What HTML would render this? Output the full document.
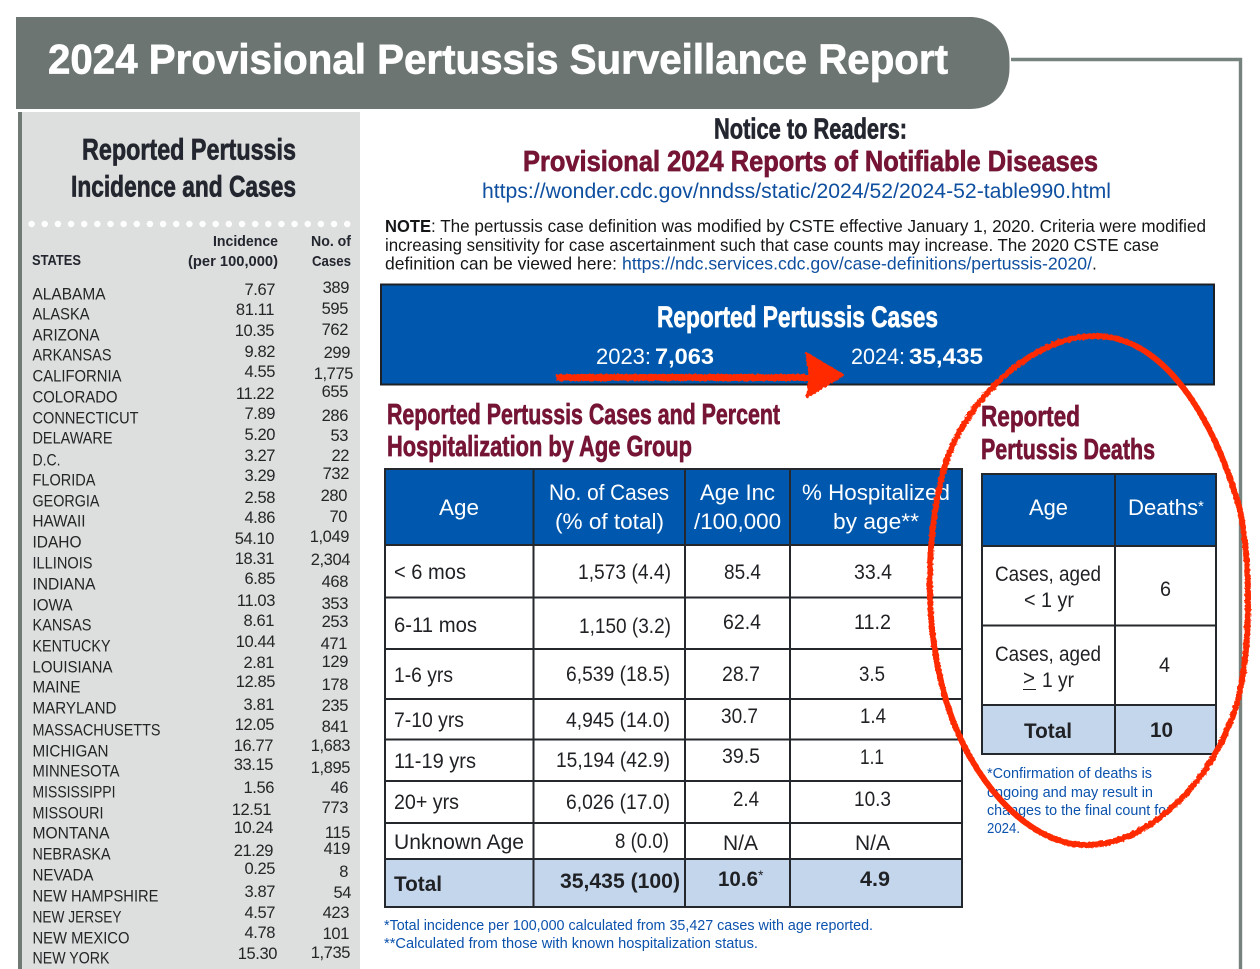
<!DOCTYPE html>
<html lang="en">
<head>
<meta charset="utf-8">
<title>2024 Provisional Pertussis Surveillance Report</title>
<style>
html,body{margin:0;padding:0;background:#fff;width:1260px;height:969px;overflow:hidden}
svg{display:block;position:absolute;left:0;top:0}
text{font-family:"Liberation Sans",Arial,sans-serif}
.st text{font-size:17px;fill:#232527}
.inc text{font-size:16.5px;letter-spacing:-.4px;fill:#232527;text-anchor:end}
.cs text{font-size:16.5px;letter-spacing:-.4px;fill:#232527;text-anchor:end}
.h{font-weight:700}
.hs{font-weight:700;stroke-width:.7px;paint-order:stroke}
.mar{fill:#751435;stroke:#751435;stroke-width:.7px;font-weight:700;font-size:29px}
.t{font-size:21px;fill:#1f2124}
.w{font-size:22px;fill:#fff}
.b{font-weight:700}
.fn{font-size:14.5px;fill:#0b52ad}
.nt{font-size:17.5px;fill:#141618}
</style>
</head>
<body>
<svg width="1260" height="969" viewBox="0 0 1260 969" xmlns="http://www.w3.org/2000/svg">
<defs>
<filter id="rough" x="-5%" y="-5%" width="110%" height="110%">
<feTurbulence type="fractalNoise" baseFrequency="0.35" numOctaves="2" seed="4"/>
<feDisplacementMap in="SourceGraphic" scale="3"/>
</filter>
</defs>
<rect width="1260" height="969" fill="#fff"/>

<!-- frame -->
<path d="M1011 59.500H1240.500V969" fill="none" stroke="#76827d" stroke-width="3.400"/>
<path d="M16 17H970C994 17 1009.500 36 1009.500 60V68C1009.500 92 994 109 970 109H16Z" fill="#6c7571"/>
<text x="48" y="73.500" font-size="42" class="hs" fill="#fff" stroke="#fff" textLength="900" lengthAdjust="spacingAndGlyphs">2024 Provisional Pertussis Surveillance Report</text>

<!-- sidebar -->
<rect x="22" y="112" width="338" height="857" fill="#dcdfde"/>
<rect x="18" y="112" width="4" height="857" fill="#6f7a75"/>
<text x="82" y="159.500" font-size="30" class="hs" fill="#23262e" stroke="#23262e" textLength="214" lengthAdjust="spacingAndGlyphs">Reported Pertussis</text>
<text x="71" y="196.500" font-size="30" class="hs" fill="#23262e" stroke="#23262e" textLength="225" lengthAdjust="spacingAndGlyphs">Incidence and Cases</text>
<line x1="31.600" y1="224" x2="350" y2="224" stroke="#fff" stroke-width="6.500" stroke-linecap="round" stroke-dasharray="0 13.150"/>
<g font-size="15" font-weight="700" fill="#23262e">
<text x="213" y="246" textLength="65" lengthAdjust="spacingAndGlyphs">Incidence</text>
<text x="188" y="266" textLength="90" lengthAdjust="spacingAndGlyphs">(per 100,000)</text>
<text x="311" y="246" textLength="40" lengthAdjust="spacingAndGlyphs">No. of</text>
<text x="312" y="266" textLength="39" lengthAdjust="spacingAndGlyphs">Cases</text>
<text x="32" y="265" textLength="49" lengthAdjust="spacingAndGlyphs">STATES</text>
</g>
<g class="st" transform="translate(-.5 -.5)">
<text x="33" y="300" textLength="73" lengthAdjust="spacingAndGlyphs">ALABAMA</text>
<text x="33" y="320" textLength="57" lengthAdjust="spacingAndGlyphs">ALASKA</text>
<text x="33" y="341" textLength="67" lengthAdjust="spacingAndGlyphs">ARIZONA</text>
<text x="33" y="361" textLength="79" lengthAdjust="spacingAndGlyphs">ARKANSAS</text>
<text x="33" y="382" textLength="89" lengthAdjust="spacingAndGlyphs">CALIFORNIA</text>
<text x="33" y="403" textLength="85" lengthAdjust="spacingAndGlyphs">COLORADO</text>
<text x="33" y="424" textLength="106" lengthAdjust="spacingAndGlyphs">CONNECTICUT</text>
<text x="33" y="444" textLength="80" lengthAdjust="spacingAndGlyphs">DELAWARE</text>
<text x="33" y="466" textLength="28" lengthAdjust="spacingAndGlyphs">D.C.</text>
<text x="33" y="486" textLength="63" lengthAdjust="spacingAndGlyphs">FLORIDA</text>
<text x="33" y="507" textLength="67" lengthAdjust="spacingAndGlyphs">GEORGIA</text>
<text x="33" y="527" textLength="53" lengthAdjust="spacingAndGlyphs">HAWAII</text>
<text x="33" y="548" textLength="49" lengthAdjust="spacingAndGlyphs">IDAHO</text>
<text x="33" y="569" textLength="60" lengthAdjust="spacingAndGlyphs">ILLINOIS</text>
<text x="33" y="590" textLength="63" lengthAdjust="spacingAndGlyphs">INDIANA</text>
<text x="33" y="611" textLength="40" lengthAdjust="spacingAndGlyphs">IOWA</text>
<text x="33" y="631" textLength="59" lengthAdjust="spacingAndGlyphs">KANSAS</text>
<text x="33" y="652" textLength="78" lengthAdjust="spacingAndGlyphs">KENTUCKY</text>
<text x="33" y="673" textLength="80" lengthAdjust="spacingAndGlyphs">LOUISIANA</text>
<text x="33" y="693" textLength="48" lengthAdjust="spacingAndGlyphs">MAINE</text>
<text x="33" y="714" textLength="84" lengthAdjust="spacingAndGlyphs">MARYLAND</text>
<text x="33" y="736" textLength="128" lengthAdjust="spacingAndGlyphs">MASSACHUSETTS</text>
<text x="33" y="757" textLength="76" lengthAdjust="spacingAndGlyphs">MICHIGAN</text>
<text x="33" y="777" textLength="87" lengthAdjust="spacingAndGlyphs">MINNESOTA</text>
<text x="33" y="798" textLength="83" lengthAdjust="spacingAndGlyphs">MISSISSIPPI</text>
<text x="33" y="819" textLength="71" lengthAdjust="spacingAndGlyphs">MISSOURI</text>
<text x="33" y="839" textLength="77" lengthAdjust="spacingAndGlyphs">MONTANA</text>
<text x="33" y="860" textLength="78" lengthAdjust="spacingAndGlyphs">NEBRASKA</text>
<text x="33" y="881" textLength="61" lengthAdjust="spacingAndGlyphs">NEVADA</text>
<text x="33" y="902" textLength="126" lengthAdjust="spacingAndGlyphs">NEW HAMPSHIRE</text>
<text x="33" y="923" textLength="89" lengthAdjust="spacingAndGlyphs">NEW JERSEY</text>
<text x="33" y="944" textLength="97" lengthAdjust="spacingAndGlyphs">NEW MEXICO</text>
<text x="33" y="964" textLength="77" lengthAdjust="spacingAndGlyphs">NEW YORK</text>
</g>
<g class="inc">
<text x="275" y="295">7.67</text><text x="274" y="315">81.11</text><text x="274" y="336">10.35</text><text x="275" y="357">9.82</text>
<text x="275" y="377">4.55</text><text x="274" y="399">11.22</text><text x="275" y="419">7.89</text><text x="275" y="440">5.20</text>
<text x="275" y="461">3.27</text><text x="275" y="481">3.29</text><text x="275" y="503">2.58</text><text x="275" y="523">4.86</text>
<text x="274" y="544">54.10</text><text x="274" y="564">18.31</text><text x="275" y="584">6.85</text><text x="275" y="606">11.03</text>
<text x="274" y="626">8.61</text><text x="275" y="647">10.44</text><text x="274" y="668">2.81</text><text x="275" y="687">12.85</text>
<text x="274" y="710">3.81</text><text x="274" y="730">12.05</text><text x="273" y="751">16.77</text><text x="273" y="770">33.15</text>
<text x="274" y="793">1.56</text><text x="271" y="815">12.51</text><text x="273" y="833">10.24</text><text x="273" y="856">21.29</text>
<text x="275" y="874">0.25</text><text x="275" y="897">3.87</text><text x="275" y="918">4.57</text><text x="275" y="938">4.78</text>
<text x="277" y="959">15.30</text>
</g>
<g class="cs">
<text x="349" y="293">389</text><text x="348" y="314">595</text><text x="348" y="335">762</text><text x="350" y="358">299</text>
<text x="353" y="379">1,775</text><text x="348" y="397">655</text><text x="348" y="421">286</text><text x="348" y="441">53</text>
<text x="349" y="461">22</text><text x="349" y="479">732</text><text x="347" y="501">280</text><text x="347" y="522">70</text>
<text x="349" y="542">1,049</text><text x="350" y="565">2,304</text><text x="348" y="587">468</text><text x="348" y="609">353</text>
<text x="348" y="627">253</text><text x="347" y="649">471</text><text x="348" y="667">129</text><text x="348" y="690">178</text>
<text x="348" y="711">235</text><text x="348" y="732">841</text><text x="350" y="751">1,683</text><text x="350" y="773">1,895</text>
<text x="348" y="793">46</text><text x="348" y="813">773</text><text x="350" y="838">115</text><text x="350" y="854">419</text>
<text x="348" y="877">8</text><text x="351" y="898">54</text><text x="349" y="918">423</text><text x="349" y="939">101</text>
<text x="350" y="958">1,735</text>
</g>

<!-- notice -->
<text x="714" y="138.500" font-size="29" class="hs" fill="#23262e" stroke="#23262e" textLength="193" lengthAdjust="spacingAndGlyphs">Notice to Readers:</text>
<text x="523" y="171" class="mar" textLength="575" lengthAdjust="spacingAndGlyphs">Provisional 2024 Reports of Notifiable Diseases</text>
<text x="482" y="198" font-size="21.500" fill="#0f4fa0" textLength="629" lengthAdjust="spacingAndGlyphs">https://wonder.cdc.gov/nndss/static/2024/52/2024-52-table990.html</text>
<text x="385" y="232" class="nt h" textLength="46" lengthAdjust="spacingAndGlyphs">NOTE</text>
<text x="431" y="232" class="nt" textLength="775" lengthAdjust="spacingAndGlyphs">: The pertussis case definition was modified by CSTE effective January 1, 2020. Criteria were modified</text>
<text x="385" y="251" class="nt" textLength="774" lengthAdjust="spacingAndGlyphs">increasing sensitivity for case ascertainment such that case counts may increase. The 2020 CSTE case</text>
<text x="385" y="269.500" class="nt" textLength="232" lengthAdjust="spacingAndGlyphs">definition can be viewed here:</text>
<text x="622" y="269.500" class="nt" style="fill:#0f4fa0" textLength="470" lengthAdjust="spacingAndGlyphs">https://ndc.services.cdc.gov/case-definitions/pertussis-2020/</text>
<text x="1092" y="269.500" class="nt">.</text>

<!-- blue box -->
<rect x="381" y="284.500" width="833" height="100" fill="#0058ae" stroke="#1d2126" stroke-width="2"/>
<text x="657" y="327" font-size="30" class="hs" fill="#fff" stroke="#fff" textLength="281" lengthAdjust="spacingAndGlyphs">Reported Pertussis Cases</text>
<text x="596" y="364" font-size="22" fill="#fff" textLength="55" lengthAdjust="spacingAndGlyphs">2023:</text>
<text x="655" y="364" font-size="22" class="h" fill="#fff" textLength="59" lengthAdjust="spacingAndGlyphs">7,063</text>
<text x="851" y="364" font-size="22" fill="#fff" textLength="54" lengthAdjust="spacingAndGlyphs">2024:</text>
<text x="909" y="364" font-size="22" class="h" fill="#fff" textLength="74" lengthAdjust="spacingAndGlyphs">35,435</text>

<!-- headings -->
<text x="387" y="424" class="mar" textLength="393" lengthAdjust="spacingAndGlyphs">Reported Pertussis Cases and Percent</text>
<text x="387" y="456" class="mar" textLength="305" lengthAdjust="spacingAndGlyphs">Hospitalization by Age Group</text>
<text x="981" y="426" class="mar" textLength="99" lengthAdjust="spacingAndGlyphs">Reported</text>
<text x="981" y="459" class="mar" textLength="174" lengthAdjust="spacingAndGlyphs">Pertussis Deaths</text>

<!-- table 1 -->
<rect x="385" y="469" width="577" height="76" fill="#0058ae"/>
<rect x="385" y="859" width="577" height="48" fill="#c4d6ec"/>
<g fill="none" stroke="#24272b" stroke-width="2">
<rect x="385" y="469" width="577" height="438"/>
<path d="M533.500 469V907M685 469V907M790 469V907"/>
<path d="M385 545H962M385 597.500H962M385 649H962M385 699H962M385 739.500H962M385 781H962M385 823H962M385 859H962"/>
</g>
<g class="w">
<text x="439" y="515" textLength="40" lengthAdjust="spacingAndGlyphs">Age</text>
<text x="549" y="500" textLength="120" lengthAdjust="spacingAndGlyphs">No. of Cases</text>
<text x="555" y="529" textLength="109" lengthAdjust="spacingAndGlyphs">(% of total)</text>
<text x="700" y="500" textLength="75" lengthAdjust="spacingAndGlyphs">Age Inc</text>
<text x="694" y="529" textLength="87" lengthAdjust="spacingAndGlyphs">/100,000</text>
<text x="802" y="500" textLength="148" lengthAdjust="spacingAndGlyphs">% Hospitalized</text>
<text x="833" y="529" textLength="86" lengthAdjust="spacingAndGlyphs">by age**</text>
</g>
<g class="t">
<text x="394" y="579" textLength="72" lengthAdjust="spacingAndGlyphs">&lt; 6 mos</text>
<text x="578" y="579" textLength="93" lengthAdjust="spacingAndGlyphs">1,573 (4.4)</text>
<text x="724" y="579" textLength="37" lengthAdjust="spacingAndGlyphs">85.4</text>
<text x="854" y="579" textLength="38" lengthAdjust="spacingAndGlyphs">33.4</text>
<text x="394" y="632" textLength="83" lengthAdjust="spacingAndGlyphs">6-11 mos</text>
<text x="579" y="633" textLength="92" lengthAdjust="spacingAndGlyphs">1,150 (3.2)</text>
<text x="723" y="629" textLength="38" lengthAdjust="spacingAndGlyphs">62.4</text>
<text x="854" y="629" textLength="37" lengthAdjust="spacingAndGlyphs">11.2</text>
<text x="394" y="682" textLength="59" lengthAdjust="spacingAndGlyphs">1-6 yrs</text>
<text x="566" y="681" textLength="104" lengthAdjust="spacingAndGlyphs">6,539 (18.5)</text>
<text x="722" y="681" textLength="38" lengthAdjust="spacingAndGlyphs">28.7</text>
<text x="859" y="681" textLength="26" lengthAdjust="spacingAndGlyphs">3.5</text>
<text x="394" y="727" textLength="70" lengthAdjust="spacingAndGlyphs">7-10 yrs</text>
<text x="566" y="727" textLength="104" lengthAdjust="spacingAndGlyphs">4,945 (14.0)</text>
<text x="721" y="723" textLength="37" lengthAdjust="spacingAndGlyphs">30.7</text>
<text x="860" y="723" textLength="26" lengthAdjust="spacingAndGlyphs">1.4</text>
<text x="394" y="768" textLength="82" lengthAdjust="spacingAndGlyphs">11-19 yrs</text>
<text x="556" y="767" textLength="114" lengthAdjust="spacingAndGlyphs">15,194 (42.9)</text>
<text x="722" y="763" textLength="38" lengthAdjust="spacingAndGlyphs">39.5</text>
<text x="860" y="764" textLength="24" lengthAdjust="spacingAndGlyphs">1.1</text>
<text x="394" y="809" textLength="65" lengthAdjust="spacingAndGlyphs">20+ yrs</text>
<text x="566" y="809" textLength="104" lengthAdjust="spacingAndGlyphs">6,026 (17.0)</text>
<text x="733" y="806" textLength="26" lengthAdjust="spacingAndGlyphs">2.4</text>
<text x="854" y="806" textLength="37" lengthAdjust="spacingAndGlyphs">10.3</text>
<text x="394" y="849" textLength="130" lengthAdjust="spacingAndGlyphs">Unknown Age</text>
<text x="615" y="848" textLength="54" lengthAdjust="spacingAndGlyphs">8 (0.0)</text>
<text x="723" y="850" textLength="35" lengthAdjust="spacingAndGlyphs">N/A</text>
<text x="855" y="850" textLength="35" lengthAdjust="spacingAndGlyphs">N/A</text>
<text x="394" y="891" class="b" textLength="48" lengthAdjust="spacingAndGlyphs">Total</text>
<text x="560" y="888" class="b" textLength="120" lengthAdjust="spacingAndGlyphs">35,435 (100)</text>
<text x="718" y="886" class="b" textLength="40" lengthAdjust="spacingAndGlyphs">10.6</text>
<text x="758" y="880" style="font-size:14px" fill="#1f2124">*</text>
<text x="860" y="886" class="b" textLength="30" lengthAdjust="spacingAndGlyphs">4.9</text>
</g>
<text x="384" y="930" class="fn" textLength="489" lengthAdjust="spacingAndGlyphs">*Total incidence per 100,000 calculated from 35,427 cases with age reported.</text>
<text x="384" y="948" class="fn" textLength="374" lengthAdjust="spacingAndGlyphs">**Calculated from those with known hospitalization status.</text>

<!-- table 2 -->
<rect x="982" y="474" width="234" height="72" fill="#0058ae"/>
<rect x="982" y="705" width="234" height="49" fill="#c4d6ec"/>
<g fill="none" stroke="#24272b" stroke-width="2">
<rect x="982" y="474" width="234" height="280"/>
<path d="M1115 474V754M982 546H1216M982 625.500H1216M982 705H1216"/>
</g>
<g class="w">
<text x="1029" y="515" textLength="39" lengthAdjust="spacingAndGlyphs">Age</text>
<text x="1128" y="515" textLength="70" lengthAdjust="spacingAndGlyphs">Deaths</text>
<text x="1198" y="511" style="font-size:15px">*</text>
</g>
<g class="t">
<text x="995" y="581" textLength="106" lengthAdjust="spacingAndGlyphs">Cases, aged</text>
<text x="1024" y="607" textLength="50" lengthAdjust="spacingAndGlyphs">&lt; 1 yr</text>
<text x="1160" y="596" textLength="11" lengthAdjust="spacingAndGlyphs">6</text>
<text x="995" y="661" textLength="106" lengthAdjust="spacingAndGlyphs">Cases, aged</text>
<text x="1023" y="685" textLength="12" lengthAdjust="spacingAndGlyphs">&gt;</text>
<text x="1042" y="687" textLength="32" lengthAdjust="spacingAndGlyphs">1 yr</text>
<text x="1159" y="672" textLength="11" lengthAdjust="spacingAndGlyphs">4</text>
<text x="1024" y="738" class="b" textLength="48" lengthAdjust="spacingAndGlyphs">Total</text>
<text x="1150" y="737" class="b" textLength="23" lengthAdjust="spacingAndGlyphs">10</text>
</g>
<rect x="1023" y="689" width="13" height="1" fill="#1f2124"/>
<text x="987" y="778" class="fn" textLength="165" lengthAdjust="spacingAndGlyphs">*Confirmation of deaths is</text>
<text x="987" y="797" class="fn" textLength="166" lengthAdjust="spacingAndGlyphs">ongoing and may result in</text>
<text x="987" y="815" class="fn" textLength="184" lengthAdjust="spacingAndGlyphs">changes to the final count for</text>
<text x="987" y="833" class="fn" textLength="33" lengthAdjust="spacingAndGlyphs">2024.</text>

<!-- red annotations -->
<g filter="url(#rough)">
<path d="M1095 336C1165 336 1215 420 1240 510C1250 560 1252 640 1238 700C1215 780 1150 845 1087 845C1022 845 966 770 946 700C928 640 923 560 941 480C958 405 1030 336 1095 336Z" fill="none" stroke="#ff2a00" stroke-width="6"/>
<path d="M556 377.500H815" fill="none" stroke="#ff2a00" stroke-width="7"/>
<path d="M806 353L843 375L807 397L810 376Z" fill="#ff2a00" stroke="#ff2a00" stroke-width="2" stroke-linejoin="round"/>
</g>
</svg>
</body>
</html>
